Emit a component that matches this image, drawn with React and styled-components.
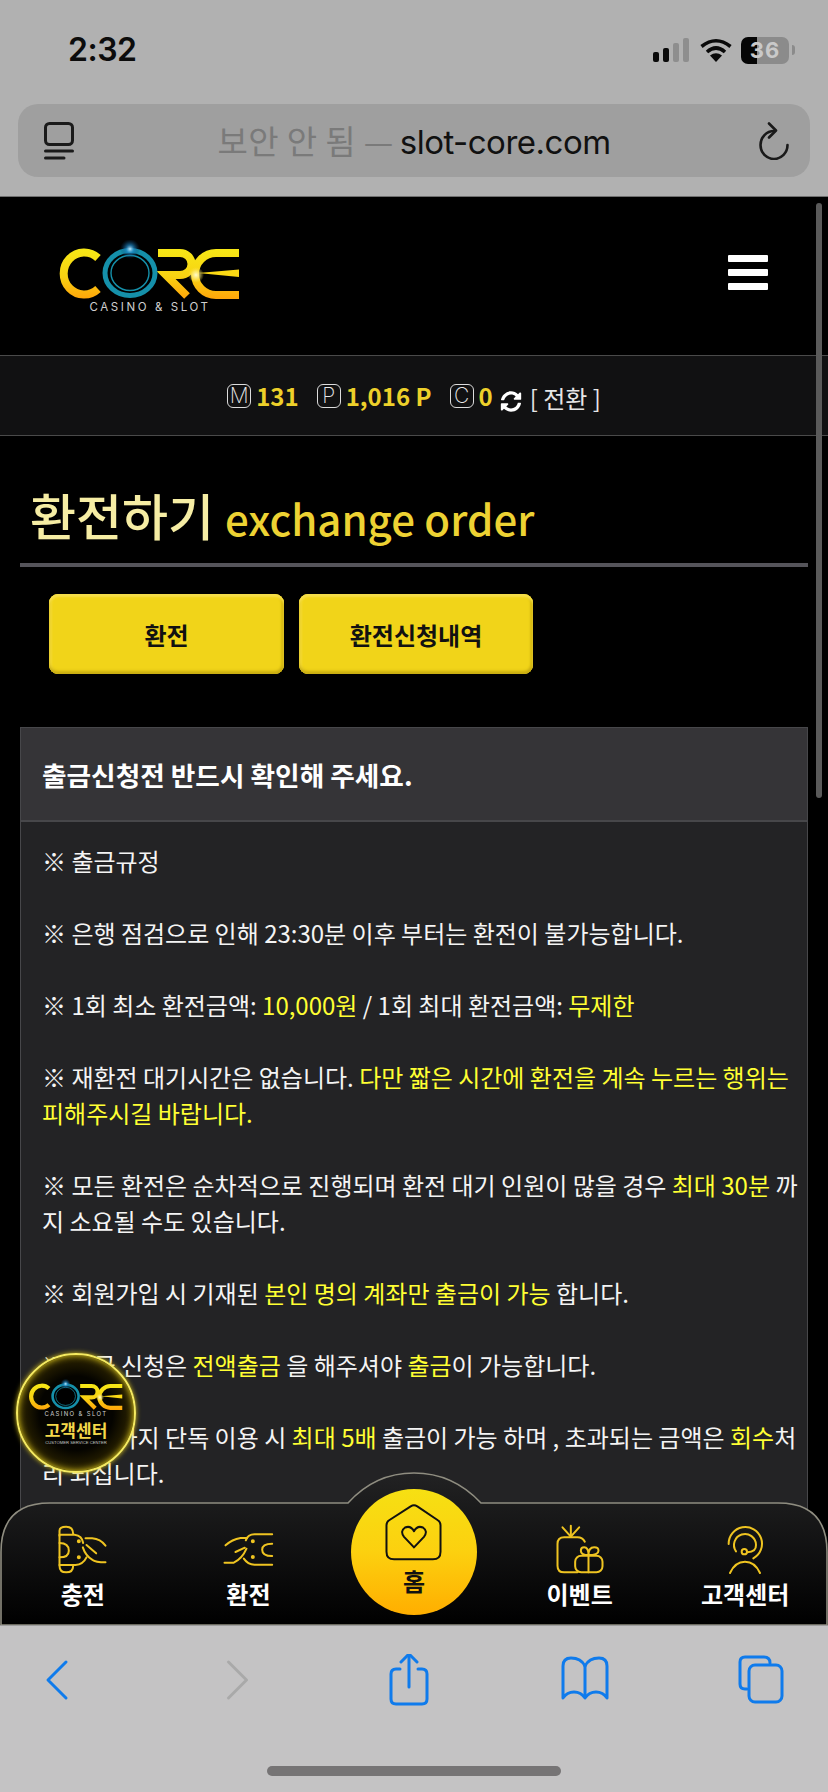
import React from 'react';
import styled, { createGlobalStyle } from 'styled-components';
import { FaSyncAlt } from 'react-icons/fa';

const KR = `"Noto Sans CJK KR", "Noto Sans", sans-serif`;

const GlobalStyle = createGlobalStyle`
    html, body {
        margin: 0;
        padding: 0;
        background: #000;
        font-family: ${KR};
    }
    * { box-sizing: border-box; }
`;

const Screen = styled.div`
    width: 828px;
    height: 1792px;
    display: flex;
    flex-direction: column;
    overflow: hidden;
`;

/* safari top */
const TopChrome = styled.div`
    height: 197px;
    flex: none;
    background: #b1b1b1;
    border-bottom: 1px solid #6f6f6f;
    padding: 0 18px;
`;

const StatusBar = styled.div`
    height: 104px;
    display: flex;
    justify-content: space-between;
    padding: 30px 15px 0 50px;
`;

const Clock = styled.div`
    font-family: Inter, sans-serif;
    font-size: 32px;
    line-height: 40px;
    font-weight: 600;
    color: #0c0c0c;
    letter-spacing: -0.5px;
`;

const StatusIcons = styled.div`
    display: flex;
    align-items: center;
    gap: 9px;
    height: 36px;
    margin-top: 2px;
`;

const Battery = styled.div`
    position: relative;
    width: 48px;
    height: 27px;
    border-radius: 7px;
    overflow: hidden;
    background: linear-gradient(90deg, #050505 0 34%, #8b8b8b 34% 100%);
    color: #c9c9c9;
    font-family: Inter, sans-serif;
    font-weight: 700;
    font-size: 22px;
    line-height: 27px;
    text-align: center;
    letter-spacing: 1px;
`;

const BatteryCap = styled.div`
    width: 3px;
    height: 10px;
    background: #8b8b8b;
    border-radius: 0 3px 3px 0;
    margin-left: -6px;
`;

const UrlBar = styled.div`
    height: 73px;
    background: #9f9f9f;
    border-radius: 20px;
    display: flex;
    align-items: center;
    justify-content: space-between;
    padding: 0 20px 0 26px;
`;

const UrlText = styled.div`
    font-size: 33px;
    line-height: 40px;
    color: #111;
    font-family: Inter, ${KR};
    letter-spacing: -0.5px;
    margin-left: -4px;
    span {
        color: #7a7a7a;
        font-family: ${KR};
        font-weight: 400;
        letter-spacing: 0.4px;
        margin-right: 6px;
    }
`;

/* web page */
const Viewport = styled.div`
    position: relative;
    flex: 1;
    min-height: 0;
    background: #000;
    overflow: hidden;
`;

const ScrollThumb = styled.div`
    position: absolute;
    top: 6px;
    right: 6px;
    width: 6px;
    height: 595px;
    border-radius: 3px;
    background: #5a5a5a;
`;

const Header = styled.header`
    height: 158px;
    display: flex;
    align-items: center;
    justify-content: space-between;
    padding: 8px 60px 0 50px;
`;

const Hamburger = styled.div`
    width: 40px;
    display: flex;
    flex-direction: column;
    gap: 7px;
    margin-bottom: 15px;
    i {
        display: block;
        height: 7px;
        border-radius: 1px;
        background: #fff;
    }
`;

const BalanceBar = styled.div`
    height: 81px;
    background: #111112;
    border-top: 1px solid #4a4a4a;
    border-bottom: 1px solid #4a4a4a;
    display: flex;
    align-items: center;
    justify-content: center;
`;

const Badge = styled.span`
    width: 24px;
    height: 24px;
    border: 1px solid #dcdcdc;
    border-radius: 6px;
    display: inline-flex;
    align-items: center;
    justify-content: center;
    font-family: Inter, sans-serif;
    font-weight: 200;
    font-size: 21px;
    color: #e8e8e8;
    margin-right: 5px;
`;

const Amount = styled.span`
    font-size: 24px;
    line-height: 30px;
    font-weight: 700;
    color: #edd02a;
    margin-right: ${(props) => props.$gap || 0}px;
`;

const SwapIcon = styled(FaSyncAlt)`
    width: 22px;
    height: 21px;
    color: #fff;
    margin: 12px 8px 0 7px;
`;

const SwapText = styled.span`
    font-size: 24px;
    line-height: 30px;
    color: #e6e6e6;
    margin-top: 5px;
`;

const TitleRow = styled.div`
    margin: 0 20px;
    height: 131px;
    padding: 45px 0 0 10px;
    border-bottom: 4px solid #55545a;
    display: flex;
    align-items: baseline;
    gap: 11px;
`;

const TitleKo = styled.h1`
    margin: 0;
    font-size: 50px;
    line-height: 66px;
    font-weight: 500;
    color: #f6eda4;
`;

const TitleEn = styled.span`
    font-size: 42px;
    line-height: 66px;
    font-weight: 500;
    color: #edd233;
`;

const ButtonRow = styled.div`
    display: flex;
    gap: 15px;
    padding: 27px 0 0 49px;
`;

const TabButton = styled.button`
    width: ${(props) => props.$width}px;
    height: 80px;
    border: 0;
    border-radius: 9px;
    background: #f1d419;
    box-shadow: inset 0 3px 2px #f5de4a, inset 0 -3px 3px #c9ad12, inset 3px 0 2px #f4da35, inset -3px 0 2px #d8bb13;
    font-family: ${KR};
    font-size: 24px;
    font-weight: 700;
    color: #111;
    padding: 0;
`;

const Panel = styled.section`
    margin: 53px 20px 0;
    border: 1px solid #47474a;
    background: #232325;
`;

const PanelHead = styled.div`
    height: 94px;
    background: #353437;
    border-bottom: 2px solid #47474a;
    display: flex;
    align-items: center;
    padding-left: 21px;
    font-size: 26.7px;
    font-weight: 700;
    color: #fff;
`;

const PanelBody = styled.div`
    padding: 21px 8px 40px 21px;
    font-size: 24px;
    line-height: 36px;
    color: #f4f4f4;
    word-break: break-all;
    p { margin: 0 0 36px; }
`;

const Hi = styled.span`
    color: #ffff33;
`;

/* floating support button */
const SupportBall = styled.div`
    position: absolute;
    left: 16px;
    bottom: 152px;
    width: 120px;
    height: 120px;
    border-radius: 50%;
    background: radial-gradient(circle at 50% 50%, #050400 0 45%, #2a2200 68%, #6b5900 86%, #c7ad10 97%);
    border: 2px solid #f5ea60;
    box-shadow: 0 0 5px #d8c21a, inset 0 0 7px #e8d21f;
    display: flex;
    flex-direction: column;
    align-items: center;
    padding-top: 24px;
`;

const BallTitle = styled.div`
    font-size: 17px;
    line-height: 20px;
    font-weight: 700;
    color: #f4d84a;
    margin-top: -1px;
`;

const BallSub = styled.div`
    font-family: "Liberation Sans", sans-serif;
    font-size: 4.2px;
    line-height: 6px;
    color: #c8c8c8;
    white-space: nowrap;
`;

/* bottom tab bar */
const BottomNav = styled.nav`
    position: absolute;
    left: 0;
    right: 0;
    bottom: 0;
    height: 122px;
    display: grid;
    grid-template-columns: repeat(5, 1fr);
    align-items: start;
`;

const NavShape = styled.svg`
    position: absolute;
    left: 0;
    top: -31px;
`;

const NavItem = styled.div`
    position: relative;
    display: flex;
    flex-direction: column;
    align-items: center;
    padding-top: 20px;
    color: #fff;
`;

const IconBox = styled.div`
    height: 52px;
    display: flex;
    align-items: center;
    justify-content: center;
`;

const NavLabel = styled.div`
    font-size: 24px;
    line-height: 28px;
    font-weight: 700;
    margin-top: 5px;
    white-space: nowrap;
`;

const HomeButton = styled.div`
    position: relative;
    width: 126px;
    height: 126px;
    margin: -14px auto 0;
    border-radius: 50%;
    background: linear-gradient(180deg, #f6e013 0%, #fcd00f 50%, #ffae00 100%);
    display: flex;
    flex-direction: column;
    align-items: center;
    padding-top: 14px;
    color: #111;
`;

const HomeLabel = styled.div`
    font-size: 24px;
    line-height: 30px;
    font-weight: 700;
    margin-top: 4px;
`;

/* safari bottom */
const Toolbar = styled.div`
    height: 167px;
    flex: none;
    background: #c4c3c4;
    border-top: 1px solid #9d9d9d;
    display: flex;
    flex-direction: column;
    align-items: center;
`;

const ToolIcons = styled.div`
    width: 100%;
    height: 140px;
    display: flex;
    gap: 128px;
    padding: 28px 0 0 33px;
`;

const ToolIcon = styled.svg`
    width: 48px;
    height: 52px;
    fill: none;
    stroke: ${(props) => props.$color || '#0f7bec'};
    stroke-width: 3;
    stroke-linecap: round;
    stroke-linejoin: round;
`;

const HomeIndicator = styled.div`
    width: 294px;
    height: 10px;
    border-radius: 5px;
    background: #767475;
`;

const Line = styled.svg`
    fill: none;
    stroke: ${(props) => props.$color || '#efc421'};
    stroke-linecap: round;
    stroke-linejoin: round;
`;

function Logo({ width, height }) {
    return (
        <svg width={width} height={height} viewBox="0 15 200 80">
            <defs>
                <linearGradient id="coreGold" gradientUnits="userSpaceOnUse" x1="0" y1="24" x2="0" y2="74">
                    <stop offset="0" stopColor="#f7e816" />
                    <stop offset="0.55" stopColor="#f8d212" />
                    <stop offset="1" stopColor="#ffa50a" />
                </linearGradient>
                <radialGradient id="coreFlare">
                    <stop offset="0" stopColor="#bfeaff" />
                    <stop offset="0.4" stopColor="#1d86c4" stopOpacity="0.7" />
                    <stop offset="1" stopColor="#0a3a66" stopOpacity="0" />
                </radialGradient>
                <radialGradient id="coreSpark">
                    <stop offset="0" stopColor="#fffbd0" />
                    <stop offset="0.5" stopColor="#fff08a" stopOpacity="0.6" />
                    <stop offset="1" stopColor="#ffe040" stopOpacity="0" />
                </radialGradient>
            </defs>
            <g fill="none" stroke="url(#coreGold)" strokeWidth="8">
                <path d="M48 33 A20.5 21 0 1 0 48 64" />
                <path d="M108 28 H130 A11.5 11 0 0 1 130 50 H116 L137 71" />
                <path d="M189 28 H166 A21 21 0 0 0 166 70 H189" />
            </g>
            <path d="M148 48 L189 44.5 L189 52 Z" fill="#fbd914" />
            <ellipse cx="80" cy="48" rx="25" ry="22.5" fill="#000" stroke="#1590aa" strokeWidth="5" />
            <ellipse cx="80" cy="48" rx="19" ry="17.5" fill="none" stroke="#1590aa" strokeWidth="1.4" />
            <circle cx="80" cy="24" r="10" fill="url(#coreFlare)" />
            <circle cx="146" cy="50" r="8" fill="url(#coreSpark)" />
            <text x="100" y="86" textAnchor="middle" fontFamily="Inter, sans-serif" fontSize="11.5" letterSpacing="2.6" fill="#cfcfcf">CASINO &amp; SLOT</text>
        </svg>
    );
}

function ChargeIcon() {
    return (
        <Line width="52" height="50" viewBox="20 25 155 150" strokeWidth="6" fill="none">
            <path d="M27 60 V45 Q27 33 47 33 Q68 33 68 55" />
            <path d="M27 60 V150 Q27 170 47 170 Q68 170 68 150" />
            <path d="M27 57 H72 Q95 60 98 82" />
            <path d="M27 148 H75 Q98 146 108 125" />
            <path d="M27 82 Q55 82 55 105 Q55 125 27 125" />
            <path d="M105 68 H125 Q150 70 165 90" />
            <path d="M97 95 Q105 120 125 132 Q135 140 165 140" />
            <path d="M108 88 L137 113" />
            <circle cx="85" cy="77" r="3" fill="#efc421" />
            <circle cx="85" cy="125" r="3" fill="#efc421" />
        </Line>
    );
}

function ExchangeIcon() {
    return (
        <Line width="52" height="35" viewBox="515 50 155 105" strokeWidth="6" fill="none">
            <path d="M665 57 H612 Q592 57 586 75" />
            <path d="M665 148 H612 Q592 148 580 130" />
            <path d="M665 85 Q635 85 635 103 Q635 122 665 122" />
            <path d="M525 90 Q545 72 570 68 H590" />
            <path d="M522 142 H550 Q575 130 588 100" />
            <path d="M583 97 L555 110" />
            <circle cx="607" cy="78" r="3" fill="#efc421" />
            <circle cx="607" cy="125" r="3" fill="#efc421" />
        </Line>
    );
}

function GiftIcon() {
    return (
        <Line width="52" height="50" viewBox="25 15 155 150" strokeWidth="6" fill="none">
            <path d="M117 68 Q110 55 95 55 H55 Q35 55 35 75 V140 Q35 160 55 160 H95" />
            <path d="M50 25 L75 53 L100 25" />
            <path d="M75 20 V53" />
            <rect x="88" y="110" width="82" height="50" rx="18" />
            <path d="M128 110 V160" />
            <path d="M128 108 Q105 108 105 95 Q105 85 115 85 Q128 85 128 108 Q128 85 145 85 Q158 85 158 95 Q158 108 128 108" />
        </Line>
    );
}

function AgentIcon() {
    return (
        <Line width="40" height="50" viewBox="540 15 120 150" strokeWidth="6" fill="none">
            <path d="M551 75 A50 50 0 1 1 625 118" />
            <path d="M573 97 A33 33 0 1 1 633 78 Q634 98 607 100" />
            <circle cx="598" cy="98" r="8" />
            <path d="M555 162 Q570 128 600 128 Q630 128 645 162" />
        </Line>
    );
}

function HomeIcon() {
    return (
        <Line $color="#111" width="59" height="59" viewBox="115 98 177 178" strokeWidth="6" fill="none">
            <path d="M195 108 L130 150 Q122 155 122 165 V245 Q122 268 145 268 H262 Q285 268 285 245 V165 Q285 155 277 150 L215 108 Q205 102 195 108 Z" />
            <path d="M205 232 L175 200 Q162 183 178 172 Q195 165 205 183 Q215 165 232 172 Q248 183 235 200 Z" />
        </Line>
    );
}

export default function App() {
    return (
        <Screen>
            <GlobalStyle />
            <TopChrome>
                <StatusBar>
                    <Clock>2:32</Clock>
                    <StatusIcons>
                        <svg width="38" height="24" viewBox="0 0 38 24">
                            <rect x="0" y="14" width="6" height="10" rx="2" fill="#0a0a0a" />
                            <rect x="10" y="10" width="6" height="14" rx="2" fill="#0a0a0a" />
                            <rect x="20" y="5" width="6" height="19" rx="2" fill="#8e8e8e" />
                            <rect x="30" y="0" width="6" height="24" rx="2" fill="#8e8e8e" />
                        </svg>
                        <svg width="32" height="24" viewBox="0 0 32 24" fill="none" stroke="#0a0a0a" strokeWidth="3.6">
                            <path d="M1.5 8.5 Q16 -3 30.5 8.5" />
                            <path d="M7 14 Q16 6 25 14" />
                            <path d="M16 24 L10 17.5 Q16 13 22 17.5 Z" fill="#0a0a0a" stroke="none" />
                        </svg>
                        <Battery>36</Battery>
                        <BatteryCap />
                    </StatusIcons>
                </StatusBar>
                <UrlBar>
                    <svg width="30" height="38" viewBox="0 0 30 38" fill="none" stroke="#1a1a1a" strokeWidth="3" strokeLinecap="round">
                        <rect x="1.5" y="1.5" width="27" height="21" rx="4" />
                        <path d="M1.5 29 H28.5" />
                        <path d="M1.5 36 H20" />
                    </svg>
                    <UrlText><span>보안 안 됨 —</span>slot-core.com</UrlText>
                    <svg width="32" height="38" viewBox="0 0 32 38" fill="none" stroke="#1a1a1a" strokeWidth="2.6" strokeLinecap="round" strokeLinejoin="round">
                        <path d="M16 9 A13.5 14 0 1 0 29.5 23" />
                        <path d="M11 1.5 L18 8.5 L11 15.5" />
                    </svg>
                </UrlBar>
            </TopChrome>

            <Viewport>
                <Header>
                    <Logo width={200} height={80} />
                    <Hamburger><i /><i /><i /></Hamburger>
                </Header>
                <BalanceBar>
                    <Badge>M</Badge><Amount $gap={18}>131</Amount>
                    <Badge>P</Badge><Amount $gap={18}>1,016 P</Amount>
                    <Badge>C</Badge><Amount>0</Amount>
                    <SwapIcon />
                    <SwapText>[ 전환 ]</SwapText>
                </BalanceBar>
                <TitleRow>
                    <TitleKo>환전하기</TitleKo>
                    <TitleEn>exchange order</TitleEn>
                </TitleRow>
                <ButtonRow>
                    <TabButton $width={235}>환전</TabButton>
                    <TabButton $width={234}>환전신청내역</TabButton>
                </ButtonRow>
                <Panel>
                    <PanelHead>출금신청전 반드시 확인해 주세요.</PanelHead>
                    <PanelBody>
                        <p>※ 출금규정</p>
                        <p>※ 은행 점검으로 인해 23:30분 이후 부터는 환전이 불가능합니다.</p>
                        <p>※ 1회 최소 환전금액: <Hi>10,000원</Hi> / 1회 최대 환전금액: <Hi>무제한</Hi></p>
                        <p>※ 재환전 대기시간은 없습니다. <Hi>다만 짧은 시간에 환전을 계속 누르는 행위는 피해주시길 바랍니다.</Hi></p>
                        <p>※ 모든 환전은 순차적으로 진행되며 환전 대기 인원이 많을 경우 <Hi>최대 30분</Hi> 까지 소요될 수도 있습니다.</p>
                        <p>※ 회원가입 시 기재된 <Hi>본인 명의 계좌만 출금이 가능</Hi> 합니다.</p>
                        <p>※ 출금 신청은 <Hi>전액출금</Hi> 을 해주셔야 <Hi>출금</Hi>이 가능합니다.</p>
                        <p>※ 슬롯까지 단독 이용 시 <Hi>최대 5배</Hi> 출금이 가능 하며 , 초과되는 금액은 <Hi>회수</Hi>처리 되집니다.</p>
                    </PanelBody>
                </Panel>

                <ScrollThumb />

                <SupportBall>
                    <Logo width={104} height={42} />
                    <BallTitle>고객센터</BallTitle>
                    <BallSub>CUSTOMER SERVICE CENTER</BallSub>
                </SupportBall>

                <BottomNav>
                    <NavShape width="828" height="153" viewBox="0 0 828 153">
                        <defs>
                            <linearGradient id="navFill" x1="0" y1="0" x2="0" y2="1">
                                <stop offset="0" stopColor="#222223" />
                                <stop offset="1" stopColor="#000" />
                            </linearGradient>
                        </defs>
                        <path
                            d="M1 153 V80 Q1 31 50 31 H348 Q375 1 414 1 Q453 1 481 31 H778 Q827 31 827 80 V153 Z"
                            fill="url(#navFill)"
                            stroke="#8f8d80"
                            strokeWidth="1.6"
                        />
                    </NavShape>
                    <NavItem><IconBox><ChargeIcon /></IconBox><NavLabel>충전</NavLabel></NavItem>
                    <NavItem><IconBox><ExchangeIcon /></IconBox><NavLabel>환전</NavLabel></NavItem>
                    <HomeButton><HomeIcon /><HomeLabel>홈</HomeLabel></HomeButton>
                    <NavItem><IconBox><GiftIcon /></IconBox><NavLabel>이벤트</NavLabel></NavItem>
                    <NavItem><IconBox><AgentIcon /></IconBox><NavLabel>고객센터</NavLabel></NavItem>
                </BottomNav>
            </Viewport>

            <Toolbar>
                <ToolIcons>
                    <ToolIcon viewBox="0 0 48 52"><path d="M33 8 L15 26 L33 44" /></ToolIcon>
                    <ToolIcon viewBox="0 0 48 52" $color="#a9a9a9"><path d="M19.5 8 L37.5 26 L19.5 44" /></ToolIcon>
                    <ToolIcon viewBox="0 0 48 52">
                        <path d="M15 15 H11 Q6 15 6 20 V45 Q6 50 11 50 H37 Q42 50 42 45 V20 Q42 15 37 15 H33" />
                        <path d="M24 33 V0" />
                        <path d="M16 8 L24 0 L32 8" />
                    </ToolIcon>
                    <ToolIcon viewBox="0 0 48 52">
                        <path d="M24 12 Q20 4 10 4 Q2 4 2 12 V44 Q6 38 13 38 Q20 38 24 44 Q28 38 35 38 Q42 38 46 44 V12 Q46 4 38 4 Q28 4 24 12 Z" />
                        <path d="M24 12 V42" />
                    </ToolIcon>
                    <ToolIcon viewBox="0 0 48 52">
                        <path d="M10 35 H8 Q3 35 3 30 V8 Q3 3 8 3 H27 Q33 3 33 9" />
                        <rect x="12" y="11" width="33" height="37" rx="6" />
                    </ToolIcon>
                </ToolIcons>
                <HomeIndicator />
            </Toolbar>
        </Screen>
    );
}
